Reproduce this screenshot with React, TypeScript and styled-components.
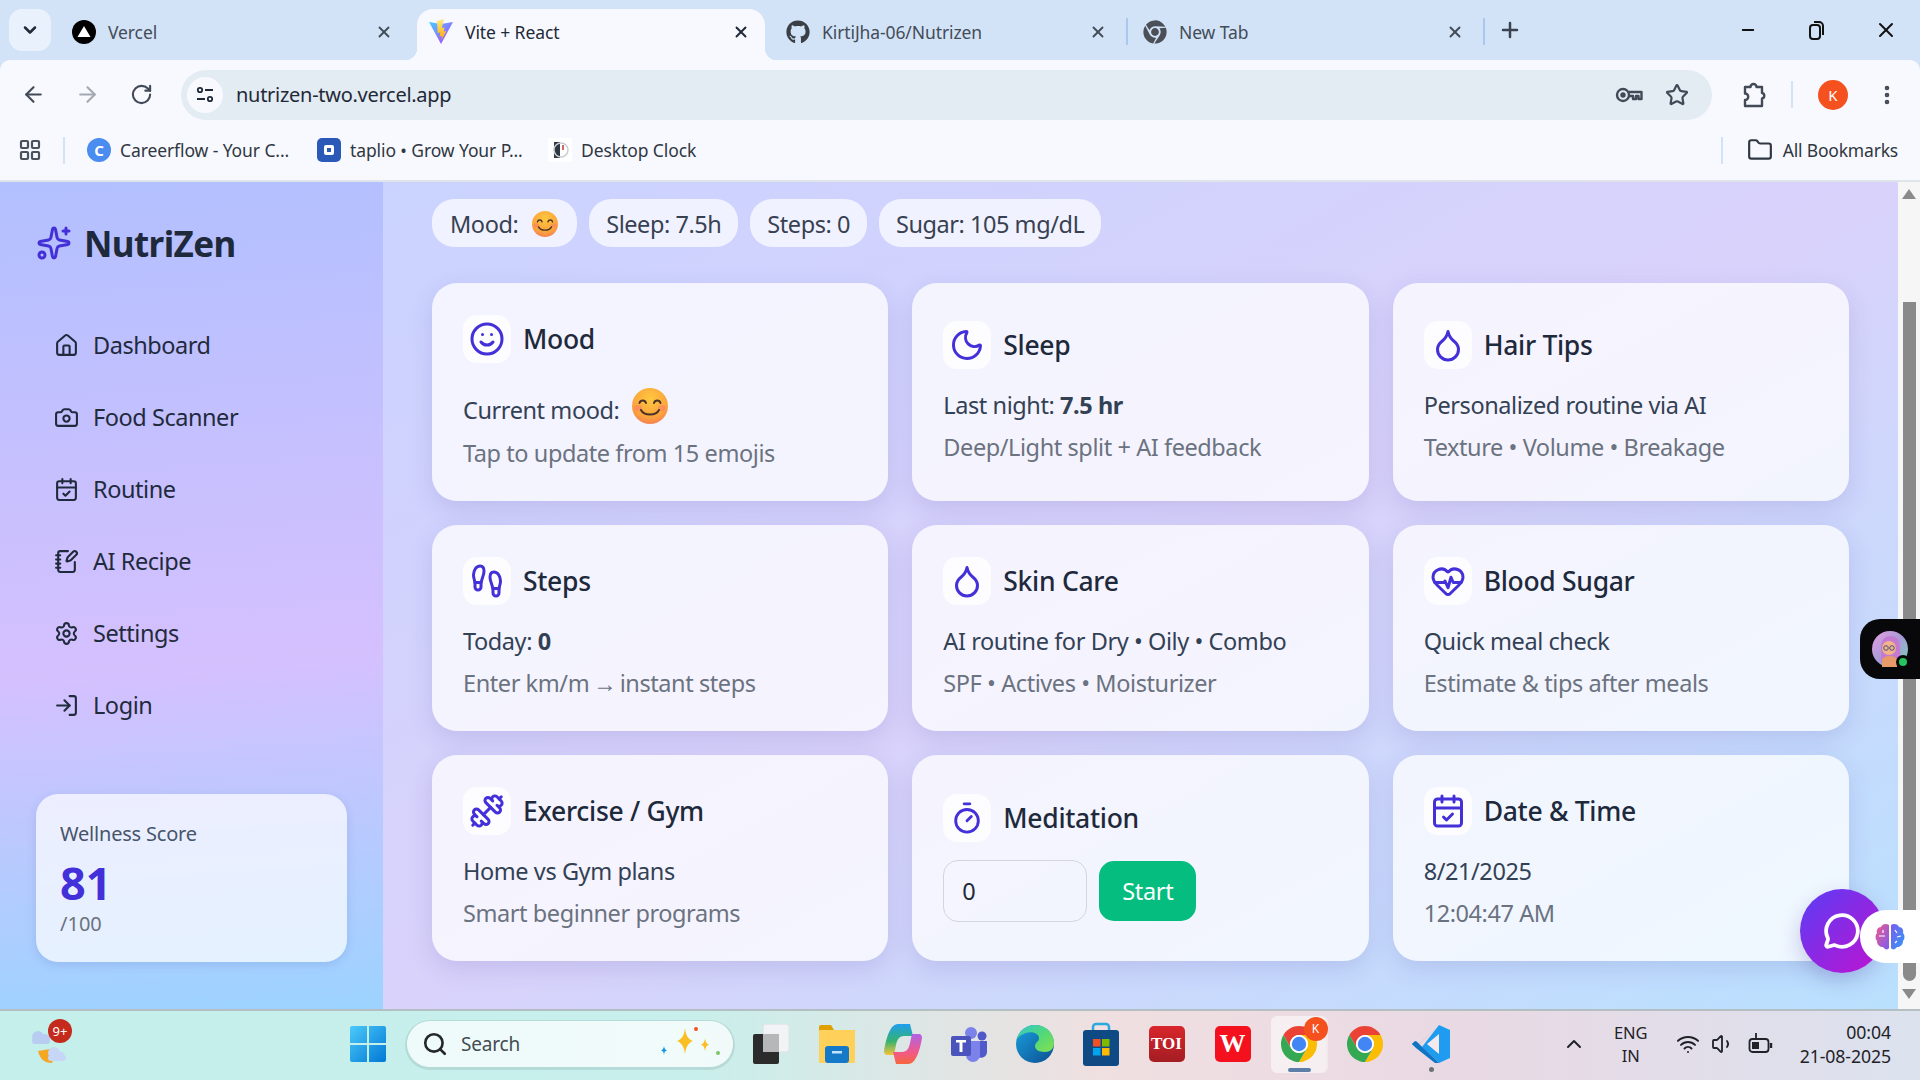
import React from "react";
import styled, { createGlobalStyle } from "styled-components";
import {
  ArrowLeft,
  ArrowRight,
  CalendarCheck,
  Camera,
  ChevronDown,
  ChevronUp,
  Droplet,
  Dumbbell,
  Folder,
  Footprints,
  HeartPulse,
  House,
  LayoutGrid,
  LogIn,
  MessageCircle,
  Minus,
  Moon,
  MoreVertical,
  NotebookPen,
  Plus,
  RotateCw,
  Search,
  Settings,
  Smile,
  Sparkles,
  Star,
  Timer,
  Volume1,
  Wifi,
  X,
} from "lucide-react";
import { FaChrome, FaGithub } from "react-icons/fa";

const UI_FONT = `"Noto Sans", "Open Sans", "Liberation Sans", sans-serif`;

const GlobalStyle = createGlobalStyle`
  html, body {
    margin: 0;
    padding: 0;
    overflow: hidden;
  }
  body {
    font-family: ${UI_FONT};
  }
  * {
    box-sizing: border-box;
  }
`;

const Screen = styled.div`
  width: 1920px;
  height: 1080px;
  display: flex;
  flex-direction: column;
  overflow: hidden;
  position: relative;
  background: #d3e3f7;
`;

/* browser chrome */
const TabStrip = styled.div`
  height: 60px;
  flex: none;
  display: flex;
  padding: 9px 0 0 9px;
  background: #d3e3f7;
`;

const TabSearch = styled.div`
  width: 42px;
  height: 42px;
  margin-right: 9px;
  border-radius: 13px;
  background: #e9f1fd;
  display: flex;
  align-items: center;
  justify-content: center;
  color: #1f2937;
`;

const Tab = styled.div<{ $active?: boolean }>`
  width: 348px;
  height: 51px;
  flex: none;
  display: flex;
  align-items: center;
  padding: 0 15px 6px 12px;
  position: relative;
  border-radius: 16px 16px 0 0;
  background: ${(p) => (p.$active ? "#f8f9ff" : "transparent")};
  color: ${(p) => (p.$active ? "#1f2937" : "#444c57")};

  ${(p) =>
    p.$active &&
    `
    &::before, &::after {
      content: "";
      position: absolute;
      bottom: 0;
      width: 12px;
      height: 12px;
    }
    &::before {
      left: -12px;
      background: radial-gradient(circle at 0 0, transparent 12px, #f8f9ff 12.5px);
    }
    &::after {
      right: -12px;
      background: radial-gradient(circle at 100% 0, transparent 12px, #f8f9ff 12.5px);
    }
  `}
`;

const TabTitle = styled.span`
  margin-left: 12px;
  flex: 1;
  font-size: 17.5px;
  letter-spacing: -0.1px;
  white-space: nowrap;
`;

const TabGap = styled.div<{ $line?: boolean }>`
  width: 9px;
  height: 27px;
  margin-top: 9px;
  flex: none;
  display: flex;
  justify-content: center;

  &::after {
    content: "";
    width: 2px;
    margin-left: 1px;
    background: ${(p) => (p.$line ? "#a8c8f0" : "transparent")};
  }
`;

const NewTab = styled.div`
  margin: 0 0 0 10px;
  height: 42px;
  display: flex;
  align-items: center;
  color: #39424e;
`;

const WindowControls = styled.div`
  margin-left: auto;
  display: flex;
  height: 42px;
  color: #111;
`;

const WindowButton = styled.div`
  width: 69px;
  display: flex;
  align-items: center;
  justify-content: center;
`;

const Toolbar = styled.div`
  height: 60px;
  flex: none;
  display: flex;
  align-items: center;
  padding: 9px 0 0 6px;
  background: #f8f9ff;
  border-radius: 10px 10px 0 0;
  color: #414a56;
`;

const NavButton = styled.div<{ $dim?: boolean }>`
  width: 54px;
  height: 50px;
  display: flex;
  align-items: center;
  justify-content: center;
  color: ${(p) => (p.$dim ? "#a3a9b1" : "#414a56")};
`;

const AddressBar = styled.div`
  width: 1531px;
  height: 50px;
  margin-left: 13px;
  flex: none;
  display: flex;
  align-items: center;
  padding: 0 23px 0 6px;
  border-radius: 25px;
  background: #e3ebf3;
`;

const SiteChip = styled.div`
  width: 36px;
  height: 36px;
  flex: none;
  border-radius: 50%;
  background: #f8f9ff;
  display: flex;
  align-items: center;
  justify-content: center;
  color: #1f2937;
`;

const Url = styled.span`
  margin-left: 13px;
  flex: 1;
  font-size: 20px;
  letter-spacing: -0.28px;
  color: #1f2937;
`;

const AddressIcons = styled.div`
  display: flex;
  gap: 22px;
  align-items: center;
  color: #414a56;
`;

const ToolbarRight = styled.div`
  display: flex;
  align-items: center;
  height: 50px;
  color: #414a56;
`;

const ExtButton = styled.div`
  margin-left: 24px;
  margin-right: 19px;
  width: 36px;
  display: flex;
  justify-content: center;
`;

const VLine = styled.div`
  width: 2px;
  height: 27px;
  background: #d3e3f7;
  flex: none;
`;

const Avatar = styled.div`
  width: 30px;
  height: 30px;
  margin-left: 25px;
  border-radius: 50%;
  background: #f4511e;
  color: #fff;
  font-size: 15px;
  display: flex;
  align-items: center;
  justify-content: center;
`;

const MenuButton = styled.div`
  margin-left: 27px;
  width: 24px;
  display: flex;
  justify-content: center;
`;

const BookmarkBar = styled.div`
  height: 62px;
  flex: none;
  display: flex;
  align-items: center;
  padding: 0 22px 0 18px;
  background: #f8f9ff;
  border-bottom: 2px solid #dfe3ea;
  color: #3c4550;
`;

const Bookmark = styled.div<{ $width?: number }>`
  display: flex;
  align-items: center;
  gap: 9px;
  width: ${(p) => (p.$width ? `${p.$width}px` : "auto")};
  font-size: 17.5px;
  letter-spacing: -0.1px;
  white-space: nowrap;
  color: #2f3742;
`;

const FirstBookmark = styled(Bookmark)`
  margin-left: 22px;
`;

const AppsButton = styled.div`
  width: 24px;
  margin-right: 21px;
  display: flex;
  color: #4a525c;
`;

const Favicon = styled.span<{ $bg: string; $round?: boolean }>`
  width: 24px;
  height: 24px;
  flex: none;
  border-radius: ${(p) => (p.$round ? "50%" : "5px")};
  background: ${(p) => p.$bg};
  color: #fff;
  font-size: 15px;
  font-weight: 700;
  display: flex;
  align-items: center;
  justify-content: center;
`;

const FaviconDot = styled.span`
  width: 10px;
  height: 10px;
  border: 3px solid #fff;
  border-radius: 2px;
`;

const BookmarksRight = styled.div`
  margin-left: auto;
  display: flex;
  align-items: center;
  gap: 24px;
`;

const AllBookmarks = styled(Bookmark)`
  gap: 10px;
  letter-spacing: -0.2px;
`;

/* page */
const Page = styled.div`
  flex: 1;
  min-height: 0;
  display: flex;
`;

const Sidebar = styled.aside`
  width: 383px;
  flex: none;
  padding: 42px 36px 0 36px;
  display: flex;
  flex-direction: column;
  background: linear-gradient(176deg, #b2c0ff 0%, #d5c0fe 58%, #9cd3ff 100%);
`;

const Brand = styled.div`
  display: flex;
  align-items: center;
  gap: 12px;
  height: 38px;
  color: #4330d8;
`;

const BrandName = styled.span`
  font-size: 35px;
  font-weight: 700;
  letter-spacing: -0.6px;
  color: #1e293b;
`;

const Nav = styled.nav`
  margin-top: 63px;
  display: flex;
  flex-direction: column;
  gap: 32px;
  padding-left: 18px;
`;

const NavItem = styled.div`
  height: 40px;
  display: flex;
  align-items: center;
  gap: 14px;
  font-size: 23.5px;
  letter-spacing: -0.45px;
  color: #1f2a3d;
`;

const ScoreCard = styled.div`
  margin-top: 69px;
  height: 168px;
  padding: 25px 24px 0;
  border-radius: 22px;
  background: rgba(255, 255, 255, 0.7);
  box-shadow: 0 3px 10px rgba(70, 80, 160, 0.16);
`;

const ScoreLabel = styled.div`
  font-size: 20px;
  line-height: 30px;
  letter-spacing: -0.2px;
  color: #475569;
`;

const ScoreValue = styled.div`
  margin-top: 6px;
  font-size: 45px;
  line-height: 56px;
  font-weight: 700;
  color: #4330d8;
`;

const ScoreUnit = styled.div`
  font-size: 20px;
  line-height: 26px;
  color: #6b7280;
`;

const Main = styled.main`
  flex: 1;
  padding: 17px 49px 0;
  overflow: hidden;
  background: linear-gradient(to bottom right, #cad3ff 0%, #d9d2fb 50%, #b9e0fe 100%);
`;

const ChipRow = styled.div`
  display: flex;
  gap: 12px;
  margin-bottom: 36px;
`;

const Chip = styled.div`
  height: 48px;
  padding: 1px 17px 0;
  display: flex;
  align-items: center;
  gap: 14px;
  border-radius: 22px;
  background: rgba(255, 255, 255, 0.7);
  font-size: 23.5px;
  letter-spacing: -0.45px;
  color: #374151;
`;

const MoodChip = styled(Chip)`
  padding-left: 18px;
  padding-right: 19px;
`;

const CardGrid = styled.div`
  display: grid;
  grid-template-columns: repeat(3, 1fr);
  gap: 24px;
`;

const Card = styled.section`
  padding: 31.5px 31px;
  min-height: 206px;
  display: flex;
  flex-direction: column;
  justify-content: center;
  border-radius: 25px;
  background: rgba(255, 255, 255, 0.75);
  box-shadow: 0 8px 24px rgba(70, 60, 150, 0.14);
`;

const CardHead = styled.div`
  display: flex;
  align-items: center;
  gap: 12px;
  margin-bottom: 21px;
`;

const IconBox = styled.div`
  width: 48px;
  height: 48px;
  flex: none;
  border-radius: 14px;
  background: rgba(255, 255, 255, 0.8);
  color: #4330d8;
  display: flex;
  align-items: center;
  justify-content: center;
`;

const CardTitle = styled.h3`
  margin: 0;
  font-size: 26.5px;
  font-weight: 500;
  letter-spacing: -0.3px;
  color: #1e293b;
`;

const CardLine = styled.div`
  font-size: 23.5px;
  line-height: 30px;
  letter-spacing: -0.42px;
  color: #334155;
`;

const CardSub = styled.div`
  margin: 12px 0 2px;
  font-size: 23.5px;
  line-height: 30px;
  letter-spacing: -0.42px;
  color: #6b7280;
`;

const ArrowGlyph = styled.span`
  margin: 0 -2px;
`;

const MoodLine = styled(CardLine)`
  height: 42px;
  display: flex;
  align-items: flex-end;
  gap: 13px;
`;

const MoodLabel = styled.span`
  padding-bottom: 1px;
`;

const MoodEmoji = styled.span`
  display: flex;
  margin-bottom: 2px;
`;

const TimerForm = styled.div`
  display: flex;
  align-items: center;
  gap: 12px;
  margin-top: -3px;
`;

const TimerInput = styled.input`
  width: 144px;
  height: 62px;
  padding: 0 18px;
  border: 1px solid #d1d5e0;
  border-radius: 15px;
  background: transparent;
  font-family: ${UI_FONT};
  font-size: 23.5px;
  color: #1f2937;
  outline: none;
`;

const StartButton = styled.button`
  width: 97px;
  height: 60px;
  border: none;
  border-radius: 15px;
  background: #05bd7e;
  font-family: ${UI_FONT};
  font-size: 23.5px;
  letter-spacing: -0.35px;
  color: #fff;
`;

/* scrollbar */
const ScrollTrack = styled.div`
  width: 22px;
  flex: none;
  display: flex;
  flex-direction: column;
  align-items: center;
  background: #f6f6f6;
`;

const ScrollArrow = styled.div<{ $down?: boolean }>`
  width: 0;
  height: 0;
  margin: ${(p) => (p.$down ? "8px 0 0" : "7px 0 0")};
  border-left: 7px solid transparent;
  border-right: 7px solid transparent;
  ${(p) => (p.$down ? "border-top: 10px solid #8a8a8a;" : "border-bottom: 10px solid #8a8a8a;")}
`;

const ScrollThumb = styled.div`
  width: 13px;
  height: 679px;
  margin-top: 103px;
  border-radius: 0 0 7px 7px;
  background: #8a8a8a;
`;

/* floating widgets that sit over the page */
const AssistantTab = styled.div`
  position: absolute;
  top: 619px;
  right: 0;
  width: 60px;
  height: 60px;
  padding-left: 12px;
  display: flex;
  align-items: center;
  border-radius: 20px 0 0 20px;
  background: #08080a;
`;

const AssistantFace = styled.div`
  width: 36px;
  height: 36px;
  position: relative;
`;

const OnlineDot = styled.span`
  position: absolute;
  right: -2px;
  bottom: -2px;
  width: 14px;
  height: 14px;
  border: 3px solid #08080a;
  border-radius: 50%;
  background: #22c55e;
`;

const ChatFab = styled.div`
  position: absolute;
  top: 889px;
  left: 1800px;
  width: 84px;
  height: 84px;
  border-radius: 50%;
  background: linear-gradient(135deg, #5b3df5, #c013d0);
  box-shadow: 0 8px 20px rgba(70, 60, 150, 0.25);
  display: flex;
  align-items: center;
  justify-content: center;
  color: #fff;
`;

const BrainTab = styled.div`
  position: absolute;
  top: 910px;
  right: 0;
  width: 60px;
  height: 53px;
  padding-left: 15px;
  display: flex;
  align-items: center;
  border-radius: 26px 0 0 26px;
  background: #fff;
`;

/* taskbar */
const Taskbar = styled.div`
  height: 71px;
  flex: none;
  display: flex;
  align-items: center;
  padding: 0 29px 3px 30px;
  border-top: 2px solid #b3bfc2;
  background: linear-gradient(90deg, #c4efeb 0%, #c8efeb 36%, #f0dfe0 58%, #e9d9e4 76%, #dbe2ee 100%);
  color: #1f2328;
`;

const Weather = styled.div`
  width: 40px;
  height: 46px;
  margin-right: 280px;
  position: relative;
  display: flex;
`;

const Badge = styled.span`
  position: absolute;
  top: -2px;
  right: -2px;
  width: 24px;
  height: 24px;
  border-radius: 50%;
  background: #c42b1c;
  color: #fff;
  font-size: 13px;
  display: flex;
  align-items: center;
  justify-content: center;
`;

const StartIcon = styled.div`
  width: 36px;
  display: flex;
  margin-right: 21px;
`;

const SearchBox = styled.div`
  width: 326px;
  height: 46px;
  margin-right: 4.5px;
  padding: 0 10px 0 15px;
  display: flex;
  align-items: center;
  gap: 13px;
  border-radius: 23px;
  background: rgba(255, 255, 255, 0.72);
  box-shadow: 0 1px 0 2px rgba(120, 150, 150, 0.22);
  font-size: 19px;
  color: #444b52;
`;

const SearchText = styled.span`
  flex: 1;
  letter-spacing: -0.2px;
`;

const TaskSlot = styled.div<{ $active?: boolean; $dot?: boolean }>`
  width: 66px;
  height: 57px;
  flex: none;
  display: flex;
  align-items: center;
  justify-content: center;
  position: relative;

  ${(p) =>
    p.$active &&
    `
    &::before {
      content: "";
      position: absolute;
      left: 5px;
      right: 6px;
      top: 0;
      bottom: 0;
      border-radius: 6px;
      background: rgba(255, 255, 255, 0.55);
      box-shadow: 2px 0 0 rgba(255, 255, 255, 0.4);
    }
    &::after {
      content: "";
      position: absolute;
      left: 22px;
      bottom: 1px;
      width: 23px;
      height: 4px;
      border-radius: 2px;
      background: #5b7fa8;
    }
  `}

  ${(p) =>
    p.$dot &&
    `
    &::after {
      content: "";
      position: absolute;
      left: 31px;
      bottom: 1px;
      width: 5px;
      height: 5px;
      border-radius: 50%;
      background: #6c7077;
    }
  `}

  & > * {
    position: relative;
  }
`;

const TextTile = styled.span<{ $bg: string; $size: number }>`
  width: 36px;
  height: 36px;
  border-radius: 5px;
  background: ${(p) => p.$bg};
  color: #fff;
  font-family: "Liberation Serif", serif;
  font-size: ${(p) => p.$size}px;
  font-weight: 700;
  display: flex;
  align-items: center;
  justify-content: center;
`;

const ChromeBadge = styled.span`
  position: absolute;
  top: 1px;
  right: 4px;
  width: 24px;
  height: 24px;
  border-radius: 50%;
  background: #f4511e;
  color: #fff;
  font-size: 12px;
  display: flex;
  align-items: center;
  justify-content: center;
`;

const Tray = styled.div`
  margin-left: auto;
  display: flex;
  align-items: center;
`;

const TrayIcon = styled.div<{ $gap: number }>`
  display: flex;
  margin-right: ${(p) => p.$gap}px;
`;

const LangBlock = styled.div`
  width: 50px;
  margin-right: 20px;
  text-align: center;
  font-size: 16.5px;
  line-height: 23px;
  letter-spacing: -0.2px;
`;

const ClockBlock = styled.div`
  text-align: right;
  font-size: 17.7px;
  line-height: 24px;
  letter-spacing: -0.1px;
`;

const VercelIcon = () => (
  <svg width="24" height="24" viewBox="0 0 24 24">
    <circle cx="12" cy="12" r="12" fill="#000" />
    <path d="M12 6l6.500 11h-13z" fill="#fff" />
  </svg>
);

const ViteIcon = () => (
  <svg width="24" height="26" viewBox="0 0 24 26">
    <defs>
      <linearGradient id="viteA" x1="0" y1="0" x2="1" y2="1">
        <stop offset="0" stopColor="#41d1ff" />
        <stop offset="1" stopColor="#bd34fe" />
      </linearGradient>
      <linearGradient id="viteB" x1="0" y1="0" x2="0" y2="1">
        <stop offset="0" stopColor="#ffea83" />
        <stop offset="1" stopColor="#ffa800" />
      </linearGradient>
    </defs>
    <path d="M0 3l12 2 12-2-12 22z" fill="url(#viteA)" />
    <path d="M15 0L8 2l.7 12 2.600-.6-.7 4.200 2.400-.6-.6 4 5-9-2.800.6 1-4-2.800.5z" fill="url(#viteB)" />
  </svg>
);

const ChromeLogo = ({ size = 36 }: { size?: number }) => (
  <svg width={size} height={size} viewBox="4 4 40 40">
    <path d="M6.68 14A20 20 0 0 1 41.32 14L24 14A10 10 0 0 0 15.34 29Z" fill="#ea4335" />
    <path d="M41.32 14A20 20 0 0 1 24 44L32.66 29A10 10 0 0 0 24 14Z" fill="#fbbc04" />
    <path d="M24 44A20 20 0 0 1 6.68 14L15.34 29A10 10 0 0 0 32.66 29Z" fill="#34a853" />
    <circle cx="24" cy="24" r="10" fill="#fff" />
    <circle cx="24" cy="24" r="8" fill="#4285f4" />
  </svg>
);

const SliderGlyph = () => (
  <svg width="20" height="20" viewBox="0 0 20 20" fill="none" stroke="currentColor" strokeWidth="1.8">
    <circle cx="5" cy="5" r="2.200" />
    <path d="M10 5h8M2 14h8" />
    <circle cx="15" cy="14" r="2.200" />
  </svg>
);

const KeyGlyph = () => (
  <svg width="28" height="24" viewBox="0 0 28 24" fill="none" stroke="currentColor" strokeWidth="2.4">
    <circle cx="8" cy="12" r="6" />
    <circle cx="8" cy="12" r="1.500" fill="currentColor" />
    <path d="M14 9h12.500v7h-3v-3h-2.500v3h-3v-3H14" strokeLinejoin="round" />
  </svg>
);

const ExtensionGlyph = () => (
  <svg width="26" height="28" viewBox="0 0 26 28" fill="none" stroke="currentColor" strokeWidth="2.4" strokeLinejoin="round">
    <path d="M4 6h5.500a3 3 0 0 1 6 0H21v6a2.800 2.800 0 0 1 0 5.500V25H4v-6a3 3 0 0 0 0-6.500z" />
  </svg>
);

const RestoreGlyph = () => (
  <svg width="18" height="20" viewBox="0 0 18 20" fill="none" stroke="currentColor" strokeWidth="2">
    <rect x="2" y="5" width="10" height="14" rx="3" />
    <path d="M6 2h5a4 4 0 0 1 4 4v9" />
  </svg>
);

const BatteryGlyph = () => (
  <svg width="26" height="24" viewBox="0 0 26 24" fill="none" stroke="currentColor" strokeWidth="1.8">
    <rect x="1.500" y="7" width="19" height="13" rx="3" />
    <path d="M23 11v5" strokeWidth="2.400" />
    <path d="M4 10h7v7H4z" fill="currentColor" stroke="none" />
    <path d="M8 1v6M5 7h6" />
  </svg>
);

const ClockFavicon = () => (
  <svg width="24" height="24" viewBox="0 0 24 24">
    <rect width="24" height="24" fill="#fff" />
    <path d="M6 4h6v16H6z" fill="#2f3742" />
    <circle cx="13" cy="12" r="7" fill="none" stroke="#c9ccd1" strokeWidth="1.5" />
    <path d="M15 7v5" stroke="#c0392b" strokeWidth="1.5" />
  </svg>
);

const SmileEmoji = ({ size }: { size: number }) => (
  <svg width={size} height={size} viewBox="0 0 36 36">
    <defs>
      <radialGradient id={`face${size}`} cx="0.5" cy="0.3" r="0.8">
        <stop offset="0" stopColor="#ffc73f" />
        <stop offset="0.65" stopColor="#fba23c" />
        <stop offset="1" stopColor="#f4705d" />
      </radialGradient>
    </defs>
    <circle cx="18" cy="18" r="18" fill={`url(#face${size})`} />
    <ellipse cx="6" cy="20" rx="4" ry="3" fill="#f97c6a" opacity="0.55" />
    <ellipse cx="30" cy="20" rx="4" ry="3" fill="#f97c6a" opacity="0.55" />
    <g fill="none" stroke="#4a3328" strokeWidth="2" strokeLinecap="round">
      <path d="M7.500 15c1-3.400 5.500-3.400 6.500 0M22 15c1-3.400 5.500-3.400 6.500 0" />
      <path d="M9 22c3 6 15 6 18 0" />
    </g>
  </svg>
);

const StartLogo = () => (
  <svg width="36" height="36" viewBox="0 0 36 36">
    <defs>
      <linearGradient id="winA" x1="0" y1="0" x2="1" y2="1">
        <stop offset="0" stopColor="#4cc9fa" />
        <stop offset="1" stopColor="#0078d4" />
      </linearGradient>
    </defs>
    <path d="M0 2a2 2 0 0 1 2-2h15v17H0zM19 0h15a2 2 0 0 1 2 2v15H19zM0 19h17v17H2a2 2 0 0 1-2-2zM19 19h17v15a2 2 0 0 1-2 2H19z" fill="url(#winA)" />
  </svg>
);

const WeatherIcon = () => (
  <svg width="40" height="46" viewBox="0 0 40 46">
    <path d="M8 30c2 8 6 12 14 12 2-4 1-10-2-14z" fill="#f5a623" />
    <g fill="#b9cdf3">
      <circle cx="8" cy="16" r="6" />
      <circle cx="15" cy="18" r="5" />
      <rect x="2" y="17" width="18" height="6" rx="3" />
    </g>
    <g fill="#c5d6f6">
      <circle cx="24" cy="32" r="6" />
      <circle cx="30" cy="35" r="4.500" />
      <rect x="18" y="34" width="18" height="6" rx="3" />
    </g>
  </svg>
);

const SparkleGroup = () => (
  <svg width="64" height="36" viewBox="0 0 64 36">
    <path d="M26 2c1 8 3 11 8 13-5 2-7 6-8 13-1-7-3-11-8-13 5-2 7-5 8-13z" fill="#fbbf24" />
    <path d="M46 12c.5 4 1.500 5.500 4 6.500-2.500 1-3.500 3-4 6.500-.5-3.500-1.500-5.500-4-6.500 2.500-1 3.500-2.500 4-6.500z" fill="#fbbf24" />
    <path d="M5 20c.3 2.500 1 3.500 3 4.300-2 .7-2.700 2-3 4.700-.3-2.700-1-4-3-4.700 2-.8 2.700-1.800 3-4.300z" fill="#1497e8" />
    <circle cx="37" cy="3" r="2" fill="#f4511e" />
    <circle cx="59" cy="27" r="2" fill="#7cc36a" />
  </svg>
);

const TaskViewIcon = () => (
  <svg width="36" height="40" viewBox="0 0 36 40">
    <rect x="10" y="0" width="26" height="28" rx="2" fill="#f1f3f4" stroke="#dcdfe2" />
    <rect x="0" y="10" width="26" height="30" rx="2" fill="#2b2b2b" />
    <rect x="10" y="10" width="16" height="18" fill="#b5b7b9" />
  </svg>
);

const ExplorerIcon = () => (
  <svg width="36" height="38" viewBox="0 0 36 38">
    <path d="M0 2a2 2 0 0 1 2-2h10l3 5h21v4H0z" fill="#e0a100" />
    <rect y="5" width="36" height="33" rx="1" fill="#ffd05a" />
    <rect x="6" y="21" width="24" height="17" rx="3" fill="#1479c8" />
    <rect x="13" y="26" width="10" height="2.500" fill="#bfe3ff" />
  </svg>
);

const CopilotIcon = () => (
  <svg width="38" height="40" viewBox="0 0 38 40">
    <defs>
      <linearGradient id="coA" x1="0" y1="0" x2="0" y2="1">
        <stop offset="0" stopColor="#1f9ef0" />
        <stop offset="0.55" stopColor="#35b26f" />
        <stop offset="1" stopColor="#f5c33b" />
      </linearGradient>
      <linearGradient id="coB" x1="0" y1="0" x2="0" y2="1">
        <stop offset="0" stopColor="#b163e8" />
        <stop offset="0.6" stopColor="#f05a8a" />
        <stop offset="1" stopColor="#f6663b" />
      </linearGradient>
    </defs>
    <path d="M14 0h12l3 12H20c-5 0-7 4-8 9l-2 10H3c-2 0-3-2-3-4 2-12 6-27 14-27z" fill="url(#coA)" />
    <path d="M24 40H12l-3-12h9c5 0 7-4 8-9l2-9h7c2 0 3 2 3 4-2 12-6 26-14 26z" fill="url(#coB)" />
  </svg>
);

const TeamsIcon = () => (
  <svg width="36" height="36" viewBox="0 0 36 36">
    <circle cx="20" cy="7" r="6" fill="#7b83eb" />
    <circle cx="31" cy="10" r="4.500" fill="#5059c9" />
    <path d="M25 15h11v11a6 6 0 0 1-11 3z" fill="#5059c9" />
    <path d="M10 15h19v14a7 7 0 0 1-14 0z" fill="#7b83eb" />
    <rect y="10" width="20" height="20" rx="2" fill="#4b53bc" />
    <path d="M5 14h10v2.500h-3.500V26h-3v-9.500H5z" fill="#fff" />
  </svg>
);

const EdgeIcon = () => (
  <svg width="38" height="38" viewBox="0 0 38 38">
    <defs>
      <linearGradient id="edgeA" x1="0" y1="0" x2="1" y2="1">
        <stop offset="0" stopColor="#36c6d3" />
        <stop offset="0.5" stopColor="#4fd87a" />
        <stop offset="1" stopColor="#86e04f" />
      </linearGradient>
      <linearGradient id="edgeB" x1="0" y1="0" x2="1" y2="1">
        <stop offset="0" stopColor="#1aa0dc" />
        <stop offset="1" stopColor="#0c4f92" />
      </linearGradient>
    </defs>
    <circle cx="19" cy="19" r="19" fill="url(#edgeB)" />
    <path d="M19 0c11 0 19 8 19 18 0 6-4 9-9 9-7 0-10-3-10-6 0-4 4-4 4-8 0-4-6-7-13-5C4 10 1 13 0 16 2 7 9 0 19 0z" fill="url(#edgeA)" />
  </svg>
);

const StoreIcon = () => (
  <svg width="36" height="44" viewBox="0 0 36 44">
    <path d="M10 10V5a3 3 0 0 1 3-3h10a3 3 0 0 1 3 3v5" fill="none" stroke="#2aa8e0" strokeWidth="2.500" />
    <rect y="8" width="36" height="36" rx="3" fill="#0f4a85" />
    <rect x="10" y="17" width="7.500" height="7.500" fill="#f25022" />
    <rect x="19" y="17" width="7.500" height="7.500" fill="#7fba00" />
    <rect x="10" y="26" width="7.500" height="7.500" fill="#00a4ef" />
    <rect x="19" y="26" width="7.500" height="7.500" fill="#ffb900" />
  </svg>
);

const VsCodeIcon = () => (
  <svg width="38" height="38" viewBox="0 0 38 38">
    <path d="M27 0l11 5v28l-11 5-17-16z" fill="#1f9cf0" />
    <path d="M27 9L15 19l12 10z" fill="#f4e9ec" />
    <path d="M27 0L4 22l-4-3 3-3 4 3L27 0z" fill="#0f74c4" />
    <path d="M0 19l4-3 23 22-4 0-19-15z" fill="#0f74c4" />
  </svg>
);

const BrainIcon = () => (
  <svg width="30" height="28" viewBox="0 0 30 28">
    <defs>
      <linearGradient id="brainA" x1="0" y1="0" x2="1" y2="1">
        <stop offset="0" stopColor="#f05a8a" />
        <stop offset="1" stopColor="#7c5cf0" />
      </linearGradient>
      <linearGradient id="brainB" x1="0" y1="0" x2="1" y2="1">
        <stop offset="0" stopColor="#7c5cf0" />
        <stop offset="1" stopColor="#2f9bf5" />
      </linearGradient>
    </defs>
    <path d="M14 2c-3-2-7-1-8 2-3 0-5 3-4 6-2 2-2 6 0 8 0 4 3 6 6 6 2 3 5 3 6 1z" fill="url(#brainA)" />
    <path d="M16 2c3-2 7-1 8 2 3 0 5 3 4 6 2 2 2 6 0 8 0 4-3 6-6 6-2 3-5 3-6 1z" fill="url(#brainB)" />
    <path d="M4 13h6M8 7v3M20 7l2 3M22 14l4-1M20 20l2-2" stroke="#fff" strokeWidth="1.200" fill="none" />
  </svg>
);

const AssistantPortrait = () => (
  <svg width="36" height="36" viewBox="0 0 36 36">
    <defs>
      <linearGradient id="portraitA" x1="0" y1="0" x2="1" y2="1">
        <stop offset="0" stopColor="#e79fe0" />
        <stop offset="0.5" stopColor="#a79ad8" />
        <stop offset="1" stopColor="#78d0b5" />
      </linearGradient>
    </defs>
    <circle cx="18" cy="18" r="18" fill="url(#portraitA)" />
    <path d="M9 16c0-8 5-11 10-11s9 4 9 11v16H9z" fill="#c47ad2" />
    <circle cx="17" cy="17" r="7" fill="#f2b58a" />
    <circle cx="14" cy="17" r="2.300" fill="none" stroke="#4b4e7a" />
    <circle cx="20" cy="17" r="2.300" fill="none" stroke="#4b4e7a" />
    <path d="M10 28c3-4 12-4 15 0v8H10z" fill="#e89a6a" />
  </svg>
);

const navItems = [
  { label: "Dashboard", icon: House },
  { label: "Food Scanner", icon: Camera },
  { label: "Routine", icon: CalendarCheck },
  { label: "AI Recipe", icon: NotebookPen },
  { label: "Settings", icon: Settings },
  { label: "Login", icon: LogIn },
];

const cards = [
  { title: "Sleep", icon: Moon, line: <>Last night: <b>7.5 hr</b></>, sub: "Deep/Light split + AI feedback" },
  { title: "Hair Tips", icon: Droplet, line: "Personalized routine via AI", sub: "Texture • Volume • Breakage" },
  { title: "Steps", icon: Footprints, line: <>Today: <b>0</b></>, sub: <>Enter km/m <ArrowGlyph>→</ArrowGlyph> instant steps</> },
  { title: "Skin Care", icon: Droplet, line: "AI routine for Dry • Oily • Combo", sub: "SPF • Actives • Moisturizer" },
  { title: "Blood Sugar", icon: HeartPulse, line: "Quick meal check", sub: "Estimate & tips after meals" },
  { title: "Exercise / Gym", icon: Dumbbell, line: "Home vs Gym plans", sub: "Smart beginner programs" },
];

const InfoCard = ({ title, icon: Icon, line, sub }: any) => (
  <Card>
    <CardHead>
      <IconBox>
        <Icon size={36} strokeWidth={2} />
      </IconBox>
      <CardTitle>{title}</CardTitle>
    </CardHead>
    <CardLine>{line}</CardLine>
    <CardSub>{sub}</CardSub>
  </Card>
);

function App() {
  return (
    <Screen>
      <GlobalStyle />
      <TabStrip>
        <TabSearch>
          <ChevronDown size={20} strokeWidth={3} />
        </TabSearch>
        <Tab>
          <VercelIcon />
          <TabTitle>Vercel</TabTitle>
          <X size={18} strokeWidth={2.5} />
        </Tab>
        <TabGap />
        <Tab $active>
          <ViteIcon />
          <TabTitle>Vite + React</TabTitle>
          <X size={18} strokeWidth={2.5} />
        </Tab>
        <TabGap />
        <Tab>
          <FaGithub size={24} color="#3a3f47" />
          <TabTitle>KirtiJha-06/Nutrizen</TabTitle>
          <X size={18} strokeWidth={2.5} />
        </Tab>
        <TabGap $line />
        <Tab>
          <FaChrome size={24} color="#4b5058" />
          <TabTitle>New Tab</TabTitle>
          <X size={18} strokeWidth={2.5} />
        </Tab>
        <TabGap $line />
        <NewTab>
          <Plus size={24} strokeWidth={2.5} />
        </NewTab>
        <WindowControls>
          <WindowButton>
            <Minus size={18} strokeWidth={2.5} />
          </WindowButton>
          <WindowButton>
            <RestoreGlyph />
          </WindowButton>
          <WindowButton>
            <X size={24} strokeWidth={2} />
          </WindowButton>
        </WindowControls>
      </TabStrip>

      <Toolbar>
        <NavButton>
          <ArrowLeft size={25} strokeWidth={2} />
        </NavButton>
        <NavButton $dim>
          <ArrowRight size={25} strokeWidth={2} />
        </NavButton>
        <NavButton>
          <RotateCw size={23} strokeWidth={2.2} />
        </NavButton>
        <AddressBar>
          <SiteChip>
            <SliderGlyph />
          </SiteChip>
          <Url>nutrizen-two.vercel.app</Url>
          <AddressIcons>
            <KeyGlyph />
            <Star size={24} strokeWidth={2.2} />
          </AddressIcons>
        </AddressBar>
        <ToolbarRight>
          <ExtButton>
            <ExtensionGlyph />
          </ExtButton>
          <VLine />
          <Avatar>K</Avatar>
          <MenuButton>
            <MoreVertical size={26} strokeWidth={2.6} />
          </MenuButton>
        </ToolbarRight>
      </Toolbar>

      <BookmarkBar>
        <AppsButton>
          <LayoutGrid size={24} strokeWidth={2.2} />
        </AppsButton>
        <VLine />
        <FirstBookmark $width={230}>
          <Favicon $bg="#4a8cf0" $round>C</Favicon>
          Careerflow - Your C...
        </FirstBookmark>
        <Bookmark $width={231}>
          <Favicon $bg="#2b59b8">
            <FaviconDot />
          </Favicon>
          taplio • Grow Your P...
        </Bookmark>
        <Bookmark>
          <ClockFavicon />
          Desktop Clock
        </Bookmark>
        <BookmarksRight>
          <VLine />
          <AllBookmarks>
            <Folder size={26} strokeWidth={2} />
            All Bookmarks
          </AllBookmarks>
        </BookmarksRight>
      </BookmarkBar>

      <Page>
        <Sidebar>
          <Brand>
            <Sparkles size={36} strokeWidth={2} />
            <BrandName>NutriZen</BrandName>
          </Brand>
          <Nav>
            {navItems.map(({ label, icon: Icon }) => (
              <NavItem key={label}>
                <Icon size={25} strokeWidth={2} />
                {label}
              </NavItem>
            ))}
          </Nav>
          <ScoreCard>
            <ScoreLabel>Wellness Score</ScoreLabel>
            <ScoreValue>81</ScoreValue>
            <ScoreUnit>/100</ScoreUnit>
          </ScoreCard>
        </Sidebar>

        <Main>
          <ChipRow>
            <MoodChip>
              Mood:
              <SmileEmoji size={26} />
            </MoodChip>
            <Chip>Sleep: 7.5h</Chip>
            <Chip>Steps: 0</Chip>
            <Chip>Sugar: 105 mg/dL</Chip>
          </ChipRow>
          <CardGrid>
            <Card>
              <CardHead>
                <IconBox>
                  <Smile size={36} strokeWidth={2} />
                </IconBox>
                <CardTitle>Mood</CardTitle>
              </CardHead>
              <MoodLine>
                <MoodLabel>Current mood:</MoodLabel>
                <MoodEmoji>
                  <SmileEmoji size={36} />
                </MoodEmoji>
              </MoodLine>
              <CardSub>Tap to update from 15 emojis</CardSub>
            </Card>
            {cards.slice(0, 5).map((c) => (
              <InfoCard key={c.title} {...c} />
            ))}
            <InfoCard {...cards[5]} />
            <Card>
              <CardHead>
                <IconBox>
                  <Timer size={34} strokeWidth={2} />
                </IconBox>
                <CardTitle>Meditation</CardTitle>
              </CardHead>
              <TimerForm>
                <TimerInput defaultValue="0" />
                <StartButton>Start</StartButton>
              </TimerForm>
            </Card>
            <InfoCard title="Date & Time" icon={CalendarCheck} line="8/21/2025" sub="12:04:47 AM" />
          </CardGrid>
        </Main>

        <ScrollTrack>
          <ScrollArrow />
          <ScrollThumb />
          <ScrollArrow $down />
        </ScrollTrack>
      </Page>

      <AssistantTab>
        <AssistantFace>
          <AssistantPortrait />
          <OnlineDot />
        </AssistantFace>
      </AssistantTab>
      <ChatFab>
        <MessageCircle size={38} strokeWidth={2.4} />
      </ChatFab>
      <BrainTab>
        <BrainIcon />
      </BrainTab>

      <Taskbar>
        <Weather>
          <WeatherIcon />
          <Badge>9+</Badge>
        </Weather>
        <StartIcon>
          <StartLogo />
        </StartIcon>
        <SearchBox>
          <Search size={26} strokeWidth={2.4} color="#24282c" />
          <SearchText>Search</SearchText>
          <SparkleGroup />
        </SearchBox>
        <TaskSlot><TaskViewIcon /></TaskSlot>
        <TaskSlot><ExplorerIcon /></TaskSlot>
        <TaskSlot><CopilotIcon /></TaskSlot>
        <TaskSlot><TeamsIcon /></TaskSlot>
        <TaskSlot><EdgeIcon /></TaskSlot>
        <TaskSlot><StoreIcon /></TaskSlot>
        <TaskSlot><TextTile $bg="linear-gradient(#d8262c, #a31d22)" $size={17}>TOI</TextTile></TaskSlot>
        <TaskSlot><TextTile $bg="#f5101e" $size={26}>W</TextTile></TaskSlot>
        <TaskSlot $active>
          <ChromeLogo />
          <ChromeBadge>K</ChromeBadge>
        </TaskSlot>
        <TaskSlot><ChromeLogo /></TaskSlot>
        <TaskSlot $dot><VsCodeIcon /></TaskSlot>
        <Tray>
          <TrayIcon $gap={20}>
            <ChevronUp size={24} strokeWidth={2} />
          </TrayIcon>
          <LangBlock>
            ENG
            <br />
            IN
          </LangBlock>
          <TrayIcon $gap={11}>
            <Wifi size={24} strokeWidth={2} />
          </TrayIcon>
          <TrayIcon $gap={13}>
            <Volume1 size={24} strokeWidth={1.8} />
          </TrayIcon>
          <TrayIcon $gap={26}>
            <BatteryGlyph />
          </TrayIcon>
          <ClockBlock>
            00:04
            <br />
            21-08-2025
          </ClockBlock>
        </Tray>
      </Taskbar>
    </Screen>
  );
}

export default App;
